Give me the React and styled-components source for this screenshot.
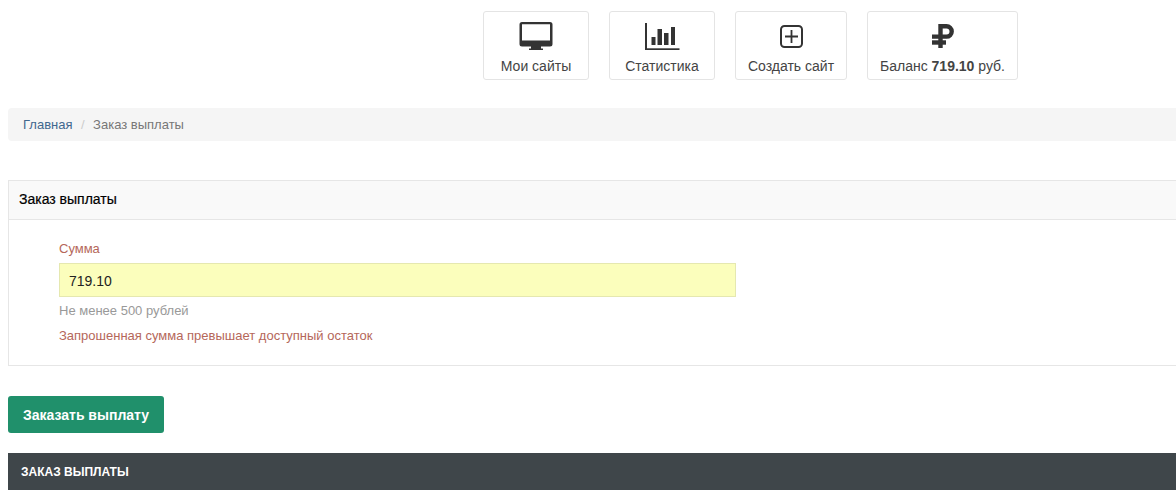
import React from "react";
import styled, { createGlobalStyle } from "styled-components";

const Global = createGlobalStyle`
  html, body {
    margin: 0;
    padding: 0;
    background: #fff;
    overflow-x: hidden;
  }
  body {
    font-family: "Liberation Sans", Arial, sans-serif;
    font-size: 13px;
    color: #333;
  }
`;

const Page = styled.div`
  width: 1200px;
  padding-left: 8px;
  padding-top: 11px;
  height: 482px;
  overflow: hidden;
`;

const Toolbar = styled.nav`
  display: flex;
  gap: 20px;
  padding-left: 475px;
  margin-bottom: 28px;
`;

const Tile = styled.a`
  width: ${(p) => p.$w}px;
  height: 69px;
  box-sizing: border-box;
  border: 1px solid #e4e4e4;
  border-radius: 3px;
  display: flex;
  flex-direction: column;
  align-items: center;
  color: #444;
  font-size: 14px;
  line-height: 16px;
`;

const IconBox = styled.div`
  height: 40px;
  margin-top: 4px;
  margin-bottom: 2px;
  display: flex;
  align-items: center;
  justify-content: center;
  color: #333;
`;

const Crumbs = styled.div`
  height: 33px;
  background: #f5f5f5;
  border-radius: 4px 0 0 4px;
  display: flex;
  align-items: center;
  padding-left: 15px;
  margin-bottom: 39px;
  font-size: 13px;
  color: #777;
`;

const CrumbLink = styled.a`
  color: #41688f;
`;

const CrumbSep = styled.span`
  color: #ccc;
  padding: 0 8.5px;
`;

const Panel = styled.section`
  border: 1px solid #e6e6e6;
  margin-bottom: 30px;
`;

const PanelHead = styled.h3`
  margin: 0;
  height: 39px;
  box-sizing: border-box;
  background: #f9f9f9;
  border-bottom: 1px solid #e6e6e6;
  display: flex;
  align-items: center;
  padding: 0 0 2px 10px;
  font-size: 14px;
  font-weight: normal;
  -webkit-text-stroke: 0.2px #000;
  color: #000;
`;

const PanelBody = styled.div`
  padding: 21px 0 20px 50px;
  height: 145px;
  box-sizing: border-box;
`;

const Label = styled.label`
  display: block;
  color: #b5675a;
  font-size: 13px;
  line-height: 16px;
  margin-bottom: 6px;
`;

const Input = styled.input`
  display: block;
  width: 677px;
  height: 34px;
  box-sizing: border-box;
  background: #fbfebc;
  border: 1px solid #e5e8b0;
  padding: 1px 9px 0;
  font: 14px "Liberation Sans", Arial, sans-serif;
  color: #222;
  margin-bottom: 6px;
  outline: none;
`;

const Help = styled.div`
  color: ${(p) => (p.$error ? "#b5675a" : "#999")};
  font-size: 13px;
  line-height: 16px;
  margin-bottom: 9px;
`;

const Submit = styled.button`
  display: block;
  width: 156px;
  height: 37px;
  background: #20906b;
  border: 0;
  border-radius: 3px;
  color: #fff;
  font: bold 14px "Liberation Sans", Arial, sans-serif;
  padding: 0;
  margin-bottom: 20px;
`;

const DarkBar = styled.div`
  height: 37px;
  background: #3f464a;
  color: #fff;
  font-size: 12px;
  font-weight: bold;
  display: flex;
  align-items: center;
  padding-left: 13px;
`;

const MonitorIcon = () => (
  <svg width="34" height="30" viewBox="0 0 34 30" fill="currentColor">
    <path
      fillRule="evenodd"
      d="M3 1h28a2.5 2.5 0 0 1 2.5 2.5V23a2.5 2.5 0 0 1-2.5 2.5H3A2.5 2.5 0 0 1 .5 23V3.500A2.5 2.500 0 0 1 3 1zM3 3.200V19.500H31V3.200z"
    />
    <path d="M12 25h10v2.500h2V29H10v-1.500h2z" />
  </svg>
);

const ChartIcon = () => (
  <svg width="36" height="30" viewBox="0 0 36 30" fill="currentColor">
    <rect x="1" y="2" width="2" height="27" />
    <rect x="1" y="27.300" width="34.500" height="1.700" />
    <rect x="7.500" y="16" width="4" height="8" />
    <rect x="13.500" y="8" width="4.500" height="16" />
    <rect x="20" y="12" width="4.500" height="12" />
    <rect x="27" y="6" width="4" height="18" />
  </svg>
);

const PlusIcon = () => (
  <svg width="26" height="26" viewBox="0 0 26 26" fill="none" stroke="currentColor">
    <rect x="3" y="3" width="21" height="21" rx="3.500" strokeWidth="2" />
    <path d="M13.500 7v13M7 13.500h13" strokeWidth="1.800" />
  </svg>
);

const RubleIcon = () => (
  <svg width="22" height="24" viewBox="0 0 22 24" fill="none" stroke="currentColor" strokeWidth="4.400">
    <path d="M8.500 24V2.200h6a5.200 5.200 0 0 1 0 10.400H0" />
    <path d="M0 18.500h14" />
  </svg>
);

const tiles = [
  { w: 106, icon: <MonitorIcon />, text: "Мои сайты" },
  { w: 106, icon: <ChartIcon />, text: "Статистика" },
  { w: 112, icon: <PlusIcon />, text: "Создать сайт" },
  {
    w: 151,
    icon: <RubleIcon />,
    text: (
      <>
        Баланс <b>719.10</b> руб.
      </>
    ),
  },
];

export default function App() {
  return (
    <>
      <Global />
      <Page>
        <Toolbar>
          {tiles.map((t, i) => (
            <Tile key={i} $w={t.w}>
              <IconBox>{t.icon}</IconBox>
              <span>{t.text}</span>
            </Tile>
          ))}
        </Toolbar>
        <Crumbs>
          <CrumbLink>Главная</CrumbLink>
          <CrumbSep>/</CrumbSep>
          <span>Заказ выплаты</span>
        </Crumbs>
        <Panel>
          <PanelHead>Заказ выплаты</PanelHead>
          <PanelBody>
            <Label>Сумма</Label>
            <Input defaultValue="719.10" />
            <Help>Не менее 500 рублей</Help>
            <Help $error>Запрошенная сумма превышает доступный остаток</Help>
          </PanelBody>
        </Panel>
        <Submit>Заказать выплату</Submit>
        <DarkBar>ЗАКАЗ ВЫПЛАТЫ</DarkBar>
      </Page>
    </>
  );
}
